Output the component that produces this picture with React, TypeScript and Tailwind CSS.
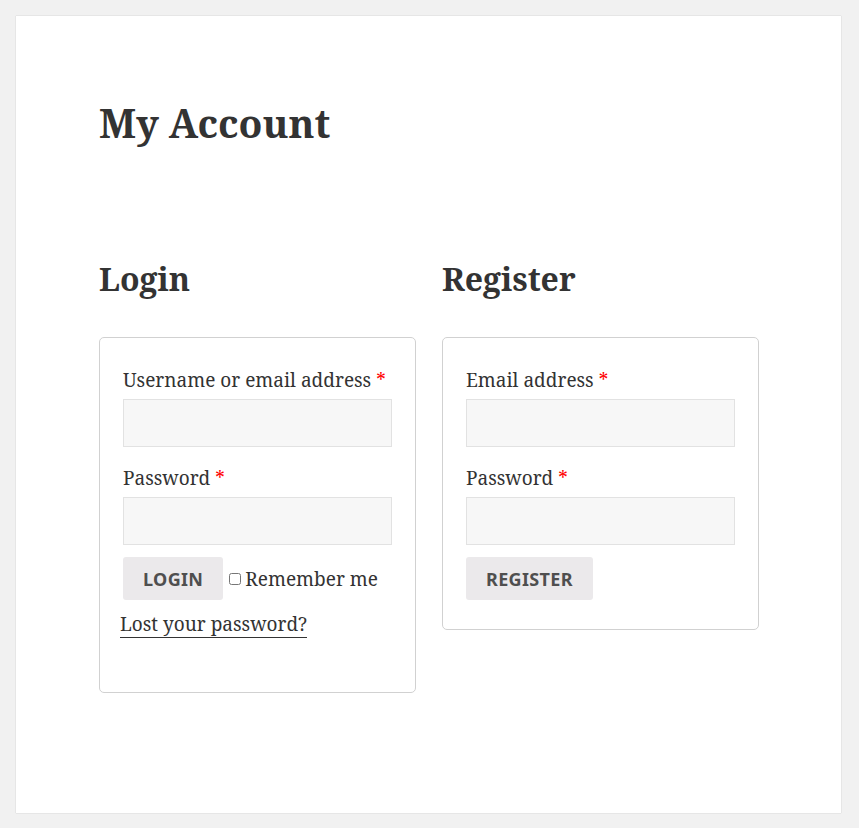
export default function App() {
  const serif = "font-['Noto_Serif','DejaVu_Serif',serif]";

  return (
    <div className="min-h-screen bg-[#f1f1f1] p-4">
      <div
        className={`h-[797px] w-[825px] bg-white px-[83px] pt-[83px] text-[#333333] shadow-[0_0_1px_rgba(0,0,0,0.25)] ${serif}`}
      >
        <h1 className="text-[39px] font-bold leading-[48px]">My Account</h1>

        <div className="mt-[112px] grid grid-cols-[317px_317px] gap-[26px]">
          {/* 로그인 */}
          <div>
            <h2 className="text-[32px] font-bold leading-[40px]">Login</h2>
            <div className="mt-[38px] rounded-[5px] border border-[#d1d1d1] px-[23px] pb-[56px] pt-[30px]">
              <Field label="Username or email address" />
              <div className="mt-[19px]">
                <Field label="Password" />
              </div>
              <div className="mt-[12px] flex items-center">
                <SubmitButton text="Login" />
                <label className="ml-[6px] flex items-center text-[19px] leading-[24px]">
                  <input type="checkbox" className="mr-[4px] h-[12px] w-[12px]" />
                  Remember me
                </label>
              </div>
              <p className="mt-[12px] text-[19px] leading-[24px]">
                <a href="#" className="-ml-[3px] border-b border-[#333333]">
                  Lost your password?
                </a>
              </p>
            </div>
          </div>

          {/* 회원가입 */}
          <div>
            <h2 className="text-[32px] font-bold leading-[40px]">Register</h2>
            <div className="mt-[38px] rounded-[5px] border border-[#d1d1d1] px-[23px] pb-[29px] pt-[30px]">
              <Field label="Email address" />
              <div className="mt-[19px]">
                <Field label="Password" />
              </div>
              <div className="mt-[12px] flex items-center">
                <SubmitButton text="Register" />
              </div>
            </div>
          </div>
        </div>
      </div>
    </div>
  );
}

function Field({ label }: { label: string }) {
  return (
    <div>
      <label className="block text-[19px] leading-[24px]">
        {label} <span className="text-[#ff0000]">*</span>
      </label>
      <input
        type="text"
        className="mt-[7px] block h-[48px] w-full border border-[#e2e2e2] bg-[#f7f7f7] outline-none"
      />
    </div>
  );
}

function SubmitButton({ text }: { text: string }) {
  return (
    <button className="h-[43px] rounded-[3px] bg-[#ebe9eb] px-[20px] font-['Noto_Sans',sans-serif] text-[18px] font-bold uppercase leading-none tracking-[0.35px] text-[#4f4f4f]">
      {text}
    </button>
  );
}
